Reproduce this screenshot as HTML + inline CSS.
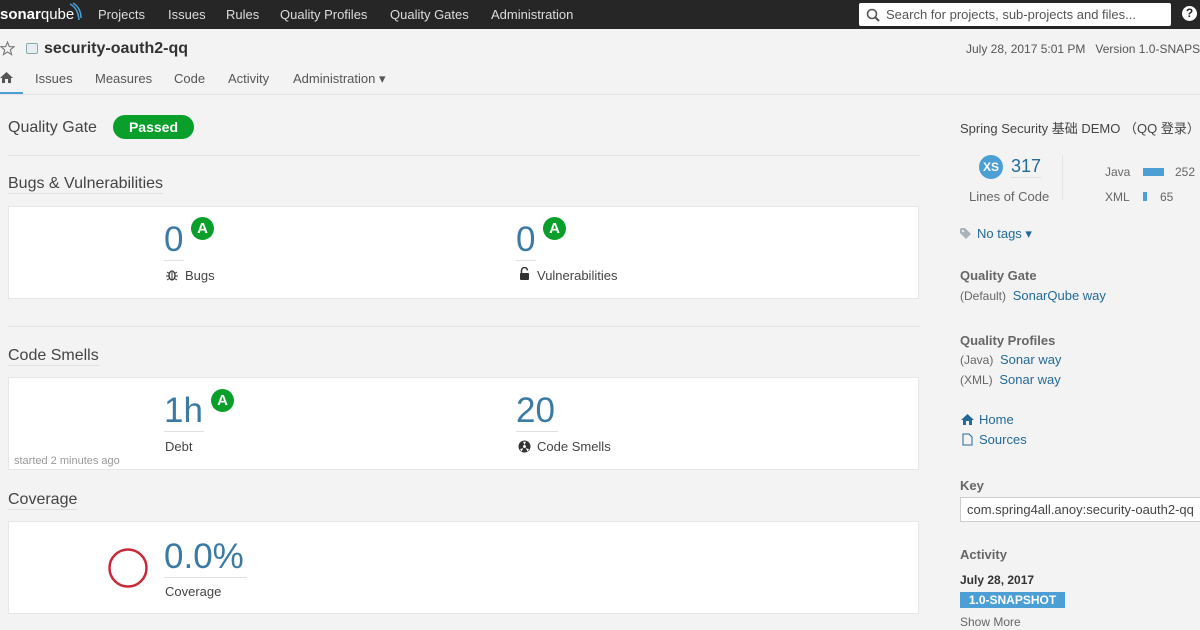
<!DOCTYPE html>
<html><head><meta charset="utf-8"><style>
*{margin:0;padding:0;box-sizing:border-box}
body{width:1200px;height:630px;overflow:hidden;background:#f3f3f4;font-family:"Liberation Sans","Noto Sans CJK SC",sans-serif;color:#444;position:relative;font-size:13px}
.a{position:absolute;white-space:nowrap}
.top{position:absolute;left:0;top:0;width:1200px;height:29px;background:#262626}
.nav{color:#ddd;font-size:13px;top:7px}
.card{position:absolute;left:8px;width:911px;background:#fff;border:1px solid #e6e6e6}
.big{font-size:35px;color:#3b7aa3;font-weight:300}
.ul{border-bottom:1px solid #e0e0e0}
.badge{position:absolute;width:23px;height:23px;border-radius:50%;background:#0a9f2a;color:#fff;font-weight:bold;font-size:15px;text-align:center;line-height:23px}
.h{font-size:16px;color:#444}
.lk{color:#236a97}
.lbl{font-size:13px;color:#444}
.sb{font-size:13px;font-weight:bold;color:#666}
</style></head><body>
<div class="top"></div>
<div class="a" style="left:0;top:6px;color:#fff;font-size:15px"><b>sonar</b>qube</div>
<svg class="a" style="left:68px;top:2px" width="14" height="20"><path d="M2 2 Q10 6 11 18 M5 1 Q13 6 13 16" stroke="#4b9fd5" stroke-width="1.5" fill="none"/></svg>
<div class="a nav" style="left:98px">Projects</div>
<div class="a nav" style="left:168px">Issues</div>
<div class="a nav" style="left:226px">Rules</div>
<div class="a nav" style="left:280px">Quality Profiles</div>
<div class="a nav" style="left:390px">Quality Gates</div>
<div class="a nav" style="left:491px">Administration</div>
<div class="a" style="left:859px;top:3px;width:312px;height:23px;background:#fff;border-radius:2px"></div>
<svg class="a" style="left:866px;top:8px" width="14" height="14"><circle cx="6" cy="6" r="4.5" stroke="#555" stroke-width="1.6" fill="none"/><path d="M9 9 L13 13" stroke="#555" stroke-width="2"/></svg>
<div class="a" style="left:886px;top:7px;color:#555;font-size:13px">Search for projects, sub-projects and files...</div>
<div class="a" style="left:1182px;top:6px;width:15px;height:15px;border-radius:50%;background:#fff;color:#262626;font-weight:bold;font-size:12px;text-align:center;line-height:15px">?</div>

<svg class="a" style="left:0;top:41px" width="15" height="15"><path d="M7.5 1 L9.3 5.6 L14 5.8 L10.3 8.8 L11.6 13.6 L7.5 10.9 L3.4 13.6 L4.7 8.8 L1 5.8 L5.7 5.6 Z" fill="none" stroke="#777" stroke-width="1.1"/></svg>
<div class="a" style="left:26px;top:43px;width:12px;height:11px;border:1px solid #8aa;border-radius:2px;background:#e8eef3"></div>
<div class="a" style="left:44px;top:40px;font-size:16px;font-weight:bold;color:#333">security-oauth2-qq</div>
<div class="a" style="left:966px;top:42px;font-size:12px;color:#555">July 28, 2017 5:01 PM&nbsp;&nbsp;&nbsp;Version 1.0-SNAPSHOT</div>
<svg class="a" style="left:0;top:71px" width="13" height="12"><path d="M6.5 1 L0 7 H2 V12 H5 V8 H8 V12 H11 V7 H13 Z" fill="#555"/></svg>
<div class="a" style="left:0;top:92px;width:23px;height:3px;background:#4b9fd5"></div>
<div class="a" style="left:0;top:94px;width:1200px;border-top:1px solid #e3e3e3"></div>
<div class="a" style="left:35px;top:71px;color:#555">Issues</div>
<div class="a" style="left:95px;top:71px;color:#555">Measures</div>
<div class="a" style="left:174px;top:71px;color:#555">Code</div>
<div class="a" style="left:228px;top:71px;color:#555">Activity</div>
<div class="a" style="left:293px;top:71px;color:#555">Administration ▾</div>

<div class="a h" style="left:8px;top:119px">Quality Gate</div>
<div class="a" style="left:113px;top:115px;width:81px;height:24px;border-radius:12px;background:#0a9f2a;color:#fff;font-weight:bold;font-size:14px;text-align:center;line-height:24px">Passed</div>
<div class="a" style="left:8px;top:155px;width:912px;border-top:1px solid #e3e3e3"></div>
<div class="a h ul" style="left:8px;top:175px">Bugs &amp; Vulnerabilities</div>
<div class="card" style="top:206px;height:93px"></div>
<div class="a big ul" style="left:164px;top:220px;width:20px;line-height:40px">0</div>
<div class="badge" style="left:191px;top:217px">A</div>
<svg class="a" style="left:166px;top:268px" width="12" height="13"><ellipse cx="6" cy="7.5" rx="3" ry="4.5" fill="none" stroke="#333" stroke-width="1.3"/><path d="M1 4 L3.5 5.5 M11 4 L8.5 5.5 M0 8 H3 M12 8 H9 M1 12 L3.5 10.5 M11 12 L8.5 10.5 M6 4 V12" stroke="#333" stroke-width="1"/></svg>
<div class="a lbl" style="left:185px;top:268px">Bugs</div>
<div class="a big ul" style="left:516px;top:220px;width:20px;line-height:40px">0</div>
<div class="badge" style="left:543px;top:217px">A</div>
<svg class="a" style="left:519px;top:267px" width="11" height="14"><path d="M2.5 6 V3.5 A3 3 0 0 1 8.5 3.5" fill="none" stroke="#333" stroke-width="1.5"/><rect x="1" y="6" width="9" height="7" rx="1" fill="#333"/></svg>
<div class="a lbl" style="left:537px;top:268px">Vulnerabilities</div>
<div class="a" style="left:8px;top:326px;width:912px;border-top:1px solid #e3e3e3"></div>
<div class="a h ul" style="left:8px;top:347px">Code Smells</div>
<div class="card" style="top:377px;height:93px"></div>
<div class="a big ul" style="left:164px;top:391px;width:40px;line-height:40px">1h</div>
<div class="badge" style="left:211px;top:389px">A</div>
<div class="a lbl" style="left:165px;top:439px">Debt</div>
<div class="a" style="left:14px;top:455px;font-size:11px;color:#999">started 2 minutes ago</div>
<div class="a big ul" style="left:516px;top:391px;width:42px;line-height:40px">20</div>
<svg class="a" style="left:518px;top:440px" width="13" height="13"><circle cx="6.5" cy="6.5" r="6" fill="#333"/><circle cx="6.5" cy="6.5" r="1.5" fill="#fff"/><path d="M6.5 6.5 L6.5 1 A5.5 5.5 0 0 1 11.3 3.7 Z M6.5 6.5 L11.3 9.3 A5.5 5.5 0 0 1 1.7 9.3 Z" fill="#fff" opacity="0"/><path d="M5 1.8 L8 1.8 L6.5 5 Z M2 9 L3.5 11.5 L5.3 8.2 Z M11 9 L9.5 11.5 L7.7 8.2 Z" fill="#fff"/></svg>
<div class="a lbl" style="left:537px;top:439px">Code Smells</div>
<div class="a h ul" style="left:8px;top:491px">Coverage</div>
<div class="card" style="top:521px;height:93px"></div>
<svg class="a" style="left:107px;top:547px" width="42" height="42"><circle cx="21" cy="21" r="18.5" stroke="#c92a3a" stroke-width="2.5" fill="none"/></svg>
<div class="a big ul" style="left:164px;top:537px;width:83px;line-height:40px">0.0%</div>
<div class="a lbl" style="left:165px;top:584px">Coverage</div>

<div class="a" style="left:960px;top:118px;font-size:13px;color:#444">Spring Security 基础 DEMO （QQ 登录）</div>
<div class="a" style="left:979px;top:155px;width:24px;height:24px;border-radius:50%;background:#4b9fd5;color:#fff;font-size:12px;font-weight:bold;text-align:center;line-height:24px">XS</div>
<div class="a lk ul" style="left:1011px;top:156px;font-size:18px">317</div>
<div class="a" style="left:969px;top:189px;color:#666">Lines of Code</div>
<div class="a" style="left:1062px;top:155px;height:45px;border-left:1px solid #e3e3e3"></div>
<div class="a" style="left:1105px;top:165px;font-size:12px;color:#666">Java</div>
<div class="a" style="left:1143px;top:168px;width:21px;height:8px;background:#4b9fd5"></div>
<div class="a" style="left:1175px;top:165px;font-size:12px;color:#666">252</div>
<div class="a" style="left:1105px;top:190px;font-size:12px;color:#666">XML</div>
<div class="a" style="left:1143px;top:192px;width:4px;height:9px;background:#4b9fd5"></div>
<div class="a" style="left:1160px;top:190px;font-size:12px;color:#666">65</div>
<svg class="a" style="left:960px;top:228px" width="14" height="11"><path d="M0 1 V5 L6 11 L11 6 L5 0 H1 Z" fill="#a9b3bb"/><circle cx="3" cy="3" r="1" fill="#fff"/></svg>
<div class="a lk" style="left:977px;top:226px">No tags ▾</div>
<div class="a sb" style="left:960px;top:268px">Quality Gate</div>
<div class="a" style="left:960px;top:288px;font-size:12px;color:#666">(Default)&nbsp; <span class="lk" style="font-size:13px">SonarQube way</span></div>
<div class="a sb" style="left:960px;top:333px">Quality Profiles</div>
<div class="a" style="left:960px;top:352px;font-size:12px;color:#666">(Java)&nbsp; <span class="lk" style="font-size:13px">Sonar way</span></div>
<div class="a" style="left:960px;top:372px;font-size:12px;color:#666">(XML)&nbsp; <span class="lk" style="font-size:13px">Sonar way</span></div>
<svg class="a" style="left:961px;top:413px" width="13" height="12"><path d="M6.5 1 L0 7 H2 V12 H5 V8 H8 V12 H11 V7 H13 Z" fill="#236a97"/></svg>
<div class="a lk" style="left:979px;top:412px">Home</div>
<svg class="a" style="left:962px;top:433px" width="11" height="13"><path d="M1 1 H7 L10 4 V12 H1 Z" fill="none" stroke="#236a97" stroke-width="1"/></svg>
<div class="a lk" style="left:979px;top:432px">Sources</div>
<div class="a sb" style="left:960px;top:478px">Key</div>
<div class="a" style="left:960px;top:497px;width:250px;height:25px;background:#fff;border:1px solid #ccc;padding:4px 6px;font-size:13px;color:#444;overflow:hidden">com.spring4all.anoy:security-oauth2-qq</div>
<div class="a sb" style="left:960px;top:547px">Activity</div>
<div class="a" style="left:960px;top:573px;font-size:12px;font-weight:bold;color:#333">July 28, 2017</div>
<div class="a" style="left:960px;top:592px;width:105px;height:16px;background:#4b9fd5;color:#fff;font-weight:bold;font-size:12px;text-align:center;line-height:16px">1.0-SNAPSHOT</div>
<div class="a" style="left:960px;top:615px;color:#666;font-size:12px">Show More</div>
</body></html>
